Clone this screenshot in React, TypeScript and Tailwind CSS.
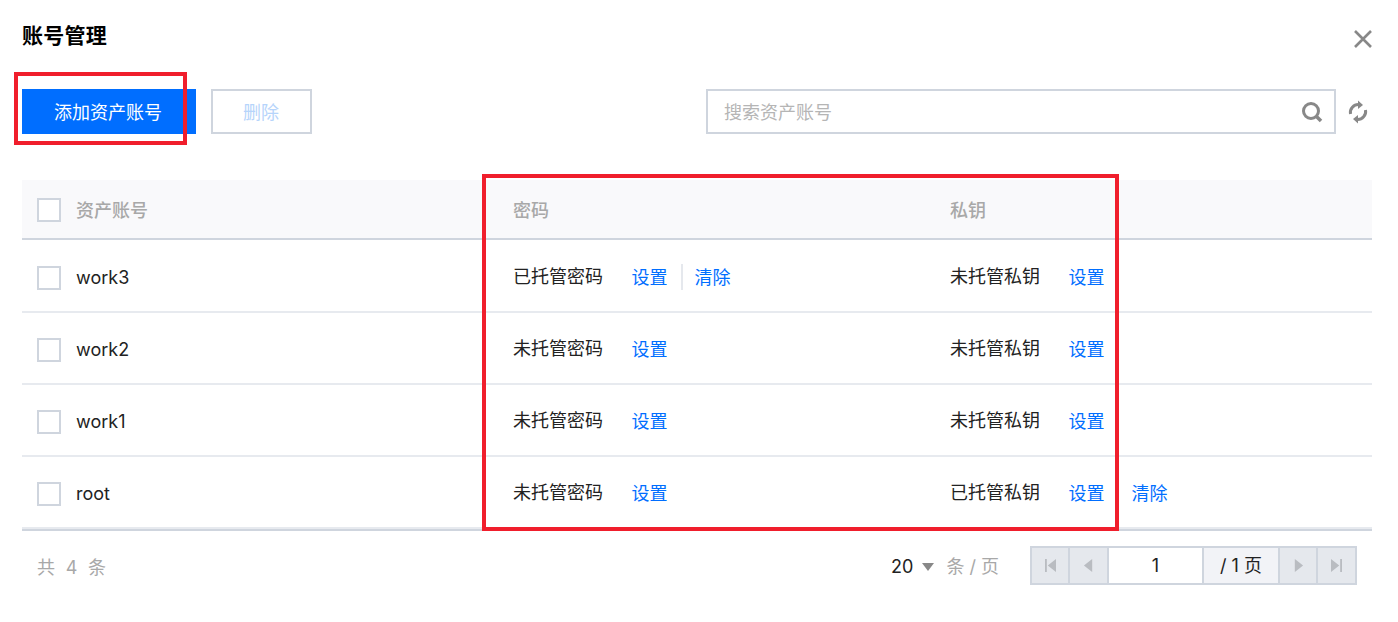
type Row = {
  name: string;
  pwd: string;
  pwdClear?: boolean;
  key: string;
  keyClear?: boolean;
};

const rows: Row[] = [
  { name: 'work3', pwd: '已托管密码', pwdClear: true, key: '未托管私钥' },
  { name: 'work2', pwd: '未托管密码', key: '未托管私钥' },
  { name: 'work1', pwd: '未托管密码', key: '未托管私钥' },
  { name: 'root', pwd: '未托管密码', key: '已托管私钥', keyClear: true },
];

function Checkbox() {
  return <div className="w-6 h-6 border-2 border-[#cfd5de] bg-white shrink-0" />;
}

function PageBtn({ d, w }: { d: string; w: string }) {
  return (
    <div className={`${w} h-full bg-[#e5e8ed] flex items-center justify-center`}>
      <svg width="11" height="13" viewBox="0 0 12 14" fill="#b9bcc1">
        <path d={d} />
      </svg>
    </div>
  );
}

export default function App() {
  return (
    <div className="relative w-[1398px] h-[622px] bg-white overflow-hidden px-[22px] font-['Inter','Noto_Sans_CJK_SC',sans-serif] text-[18px] text-black">
      <div className="flex items-center justify-between h-[72px] pt-[2px]">
        <h1 className="text-[21px] font-bold leading-none tracking-[0.25px] -translate-y-[2px]">账号管理</h1>
        <svg className="mr-[4px] mt-[4px]" width="18" height="18" viewBox="0 0 18 18" stroke="#888888" strokeWidth="2.6" fill="none">
          <path d="M1 1 L17 17 M17 1 L1 17" />
        </svg>
      </div>

      <div className="flex items-center mt-[17px] h-[45px]">
        <button className="w-[174px] h-full bg-[#006eff] text-white text-[18px] leading-none pt-[2px] pr-[2px]">添加资产账号</button>
        <button className="w-[101px] h-full ml-[15px] border-2 border-[#cfd5de] text-[#b6d4fb] text-[18px] leading-none pt-[2px] pr-[1px]">删除</button>
        <div className="w-[630px] h-full ml-[394px] border-2 border-[#cfd5de] flex items-center justify-between pl-[16px] pr-[11px]">
          <span className="text-[#b5b5b5] translate-y-[1px]">搜索资产账号</span>
          <svg width="22" height="22" viewBox="0 0 22 22" fill="none" stroke="#888888">
            <circle cx="10" cy="10" r="7.5" strokeWidth="3" />
            <path d="M15.5 15.5 L20 20" strokeWidth="3.6" />
          </svg>
        </div>
        <svg className="ml-[12px]" width="20" height="24" viewBox="0 0 20 24" fill="none" stroke="#888888" strokeWidth="3">
          <path d="M2.5 14 A8 8 0 0 1 11 4.5" />
          <path d="M17.5 10 A8 8 0 0 1 9 19.5" />
          <path d="M10 0.5 L15 5 L10 9 Z" fill="#888888" stroke="none" />
          <path d="M10 15 L5 19 L10 23.5 Z" fill="#888888" stroke="none" />
        </svg>
      </div>

      <div className="mt-[46px] w-[1350px]">
        <div className="flex items-center h-[60px] pt-[2px] mb-[1px] bg-[#f9f9fb] border-b-2 border-[#cfd5de] text-[#a8a8a8] font-medium">
          <div className="w-[477px] pl-[15px] flex items-center gap-[15px]">
            <Checkbox />
            <span>资产账号</span>
          </div>
          <div className="w-[437px] pl-[14px]">密码</div>
          <div className="pl-[14px]">私钥</div>
        </div>

        {rows.map((r) => (
          <div key={r.name} className="flex items-center h-[72px] pt-[4px] border-b-2 border-[#e7eaef]">
            <div className="w-[477px] pl-[15px] flex items-center gap-[15px]">
              <Checkbox />
              <span className="text-[#222] text-[18px] -translate-y-[1px]">{r.name}</span>
            </div>
            <div className="w-[437px] pl-[14px] flex items-center -translate-y-[1px]">
              <span className="w-[118.5px] text-[#222] -translate-y-[1px]">{r.pwd}</span>
              <a className="text-[#006eff]">设置</a>
              {r.pwdClear && (
                <>
                  <span className="w-[2px] h-[26px] bg-[#e5e8ed] ml-[13px] mr-[12px]" />
                  <a className="text-[#006eff]">清除</a>
                </>
              )}
            </div>
            <div className="pl-[14px] flex items-center -translate-y-[1px]">
              <span className="w-[118.5px] text-[#222] -translate-y-[1px]">{r.key}</span>
              <a className="text-[#006eff]">设置</a>
              {r.keyClear && <a className="text-[#006eff] ml-[27px]">清除</a>}
            </div>
          </div>
        ))}
        <div className="h-[2px] bg-[#cfd5de]" />
      </div>

      <div className="flex items-center justify-between w-[1320px] mt-[15px] h-[39px] ml-[15px]">
        <span className="text-[#a8a8a8] tracking-[2.8px] translate-y-[2px]">共 4 条</span>
        <div className="flex items-center h-full">
          <span className="text-[#222] translate-y-[1px]">20</span>
          <span className="ml-[9px] mt-[3px] w-0 h-0 border-x-[6px] border-x-transparent border-t-[8px] border-t-[#888888]" />
          <span className="ml-[12px] text-[#a8a8a8] translate-y-[1px]">条 / 页</span>
          <div className="ml-[31px] h-[39px] flex border-2 border-[#cfd5de] gap-[2px] bg-[#cfd5de]">
            <PageBtn w="w-[36px]" d="M0 0 H2 V14 H0 Z M12 0 V14 L3 7 Z" />
            <PageBtn w="w-[37px]" d="M10 0 V14 L1 7 Z" />
            <div className="w-[93px] bg-white flex items-center justify-center text-[#222]">1</div>
            <div className="w-[74px] bg-[#f2f3f7] flex items-center justify-center text-[#222]">/ 1 页</div>
            <PageBtn w="w-[36px]" d="M2 0 V14 L11 7 Z" />
            <PageBtn w="w-[37px]" d="M0 0 V14 L9 7 Z M10 0 H12 V14 H10 Z" />
          </div>
        </div>
      </div>

      <div className="absolute left-[14px] top-[72px] w-[173px] h-[73px] border-4 border-[#f01e2c] pointer-events-none" />
      <div className="absolute left-[482px] top-[174px] w-[637px] h-[357px] border-4 border-[#f01e2c] pointer-events-none" />
    </div>
  );
}
